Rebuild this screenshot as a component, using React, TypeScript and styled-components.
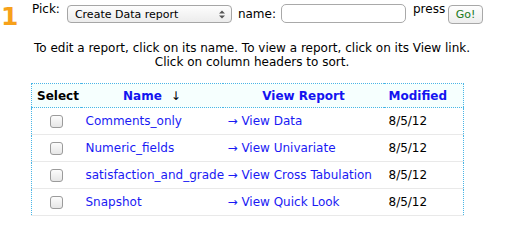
import React from 'react';
import styled, { createGlobalStyle } from 'styled-components';

const GlobalStyle = createGlobalStyle`
  body {
    margin: 0;
    background: #fff;
    font-family: "DejaVu Sans", Verdana, sans-serif;
    font-size: 12px;
    color: #000;
  }
`;

const Page = styled.div`
  padding: 3px 0 0 2px;
  width: 525px;
`;

const StepRow = styled.div`
  display: flex;
  align-items: flex-start;
`;

const StepNumber = styled.div`
  width: 30px;
  margin-left: -1px;
  padding-top: 1px;
  font-family: "DejaVu Sans", sans-serif;
  font-size: 25px;
  font-weight: bold;
  line-height: 25px;
  color: #f7a11a;
`;

const PickForm = styled.form`
  display: flex;
  align-items: flex-start;
  margin: 0 0 0 1px;
`;

const Label = styled.span<{ $drop?: number; $gap?: number }>`
  padding-top: ${({ $drop }) => $drop || 0}px;
  margin-right: ${({ $gap }) => $gap || 6}px;
  line-height: 13px;
`;

const Select = styled.div`
  width: 150px;
  height: 16px;
  margin-top: 2px;
  margin-right: 6px;
  border: 1px solid #a6a6a6;
  border-radius: 4px;
  background: linear-gradient(#fdfdfd, #ececec);
  display: flex;
  align-items: center;
  justify-content: space-between;
  padding: 0 6px 0 7px;
  box-sizing: content-box;
  font-size: 11px;
`;

const SelectArrows = styled.svg`
  width: 6px;
  height: 9px;
`;

const NameInput = styled.input`
  width: 119px;
  height: 17px;
  margin: 1px 7px 0 0;
  padding: 0 2px;
  border: 1px solid #a9a9a9;
  border-radius: 5px;
  box-sizing: content-box;
  font: inherit;
`;

const GoButton = styled.button`
  width: 35px;
  height: 19px;
  margin-top: 2px;
  padding: 0;
  border: 1px solid #a8a8a8;
  border-radius: 4px;
  background: linear-gradient(#fefefe, #ededed);
  color: #1b7a1b;
  font-family: "DejaVu Sans", sans-serif;
  font-size: 11px;
`;

const Help = styled.p`
  margin: 12px 0 0 0;
  width: 500px;
  text-align: center;
  line-height: 14px;
`;

const ReportTable = styled.table`
  margin: 14px 0 0 29px;
  width: 433px;
  table-layout: fixed;
  border-collapse: collapse;
  border-left: 1px dotted #49b6e6;
  border-right: 1px dotted #49b6e6;
`;

const Col = styled.col<{ $width: number }>`
  width: ${({ $width }) => $width}px;
`;

const HeadRow = styled.tr`
  background: #f6fffe;
  border-top: 1px dotted #49b6e6;
  border-bottom: 1px dotted #49b6e6;
`;

const Th = styled.th<{ $color?: string; $align?: string }>`
  height: 23px;
  padding: 0 4px 0 5px;
  font-weight: bold;
  text-align: ${({ $align }) => $align || 'center'};
  color: ${({ $color }) => $color || '#1414f0'};
  white-space: nowrap;
`;

const SortArrow = styled.span`
  display: inline-block;
  margin-left: 9px;
  color: #000;
  font-weight: normal;
`;

const Row = styled.tr`
  border-bottom: 1px solid #e9e9e9;
`;

const Td = styled.td<{ $align?: string }>`
  height: 26px;
  padding: 0 4px 0 5px;
  text-align: ${({ $align }) => $align || 'left'};
  white-space: nowrap;
`;

const Checkbox = styled.span`
  display: inline-block;
  width: 11px;
  height: 11px;
  border: 1px solid #9b9b9b;
  border-radius: 3px;
  background: linear-gradient(#fcfcfc, #e6e6e6);
  vertical-align: middle;
`;

const ReportLink = styled.a`
  color: #1a1af4;
  text-decoration: none;
`;

const reports = [
  { name: 'Comments_only', view: 'View Data', modified: '8/5/12' },
  { name: 'Numeric_fields', view: 'View Univariate', modified: '8/5/12' },
  { name: 'satisfaction_and_grade', view: 'View Cross Tabulation', modified: '8/5/12' },
  { name: 'Snapshot', view: 'View Quick Look', modified: '8/5/12' },
];

const App = () => (
  <Page>
    <GlobalStyle />
    <StepRow>
      <StepNumber>1</StepNumber>
      <PickForm onSubmit={(e) => e.preventDefault()}>
        <Label $gap={7}>Pick:</Label>
        <Select>
          <span>Create Data report</span>
          <SelectArrows viewBox="0 0 6 9">
            <path d="M0 3.5 L3 0.5 L6 3.5 Z M0 5.5 L3 8.5 L6 5.5 Z" fill="#555" />
          </SelectArrows>
        </Select>
        <Label $drop={5} $gap={5}>name:</Label>
        <NameInput type="text" />
        <Label $gap={3}>press</Label>
        <GoButton type="submit">Go!</GoButton>
      </PickForm>
    </StepRow>
    <Help>
      To edit a report, click on its name. To view a report, click on its View link.
      <br />
      Click on column headers to sort.
    </Help>
    <ReportTable>
      <colgroup>
        <Col $width={49} />
        <Col $width={142} />
        <Col $width={161} />
        <Col $width={80} />
      </colgroup>
      <thead>
        <HeadRow>
          <Th $color="#000" $align="left">Select</Th>
          <Th>
            Name<SortArrow>↓</SortArrow>
          </Th>
          <Th>View Report</Th>
          <Th $align="left">Modified</Th>
        </HeadRow>
      </thead>
      <tbody>
        {reports.map((r) => (
          <Row key={r.name}>
            <Td $align="center"><Checkbox /></Td>
            <Td><ReportLink href="#">{r.name}</ReportLink></Td>
            <Td><ReportLink href="#">→ {r.view}</ReportLink></Td>
            <Td>{r.modified}</Td>
          </Row>
        ))}
      </tbody>
    </ReportTable>
  </Page>
);

export default App;
